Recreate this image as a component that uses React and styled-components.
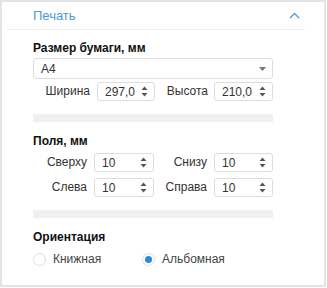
import React, { useState } from "react";
import styled, { createGlobalStyle } from "styled-components";

const GlobalStyle = createGlobalStyle`
  html, body { margin: 0; padding: 0; background: #ffffff; }
  body { font-family: "Liberation Sans", Arial, sans-serif; color: #333; }
`;

const Card = styled.div`
  box-sizing: border-box;
  width: 326px;
  height: 287px;
  border: 2px solid #e4e4e4;
  background: #fff;
`;

const Header = styled.div`
  display: flex;
  align-items: center;
  justify-content: space-between;
  height: 27px;
  margin: 0 19px 0 5px;
  padding: 0 5px 0 26px;
  border-bottom: 1px solid #eeeeee;
`;

const Title = styled.span`
  font-size: 13px;
  color: #4a9ad8;
`;

const Body = styled.div`
  padding: 10px 0 0 31px;
  width: 240px;
`;

const SectionTitle = styled.div`
  font-size: 12px;
  font-weight: bold;
  color: #111;
  height: 15px;
  line-height: 15px;
  margin-top: ${(p) => p.top || 0}px;
`;

const Select = styled.div`
  box-sizing: border-box;
  display: flex;
  align-items: center;
  justify-content: space-between;
  height: 21px;
  margin-top: 2px;
  padding: 0 6px 0 7px;
  border: 1px solid #dddddd;
  border-radius: 3px;
  font-size: 12px;
  color: #333;
`;

const Row = styled.div`
  display: grid;
  grid-template-columns: ${(p) => p.cols};
  margin-top: ${(p) => p.top}px;
  height: 19px;
`;

const Field = styled.div`
  display: flex;
  align-items: center;
  justify-content: flex-end;
  gap: ${(p) => p.gap || 7}px;
`;

const Label = styled.span`
  font-size: 12px;
  color: #333;
  position: relative;
  top: -1px;
`;

const Spin = styled.div`
  box-sizing: border-box;
  display: flex;
  align-items: center;
  justify-content: space-between;
  width: ${(p) => p.w}px;
  height: 19px;
  padding: 0 6px 0 7px;
  border: 1px solid #dddddd;
  border-radius: 3px;
  font-size: 12px;
  color: #333;
`;

const Bar = styled.div`
  height: 8px;
  background: #f0f0f0;
  margin-top: ${(p) => p.top}px;
`;

const Radios = styled.div`
  display: flex;
  margin-top: 7px;
  height: 14px;
`;

const RadioItem = styled.label`
  display: flex;
  align-items: center;
  gap: 7px;
  width: 109px;
  font-size: 12px;
  color: #444;
  cursor: pointer;
`;

const Circle = styled.span`
  box-sizing: border-box;
  width: 13px;
  height: 13px;
  border-radius: 50%;
  border: 1px solid #dedede;
  display: flex;
  align-items: center;
  justify-content: center;
  &::after {
    content: "";
    width: 7px;
    height: 7px;
    border-radius: 50%;
    background: ${(p) => (p.on ? "#2b8bd6" : "transparent")};
  }
`;

const Chevron = () => (
  <svg width="11" height="7" viewBox="0 0 11 7">
    <path d="M1 6 L5.5 1.5 L10 6" fill="none" stroke="#4a9ad8" strokeWidth="1.3" />
  </svg>
);

const Caret = () => (
  <svg width="7" height="4" viewBox="0 0 7 4">
    <path d="M0 0 H7 L3.5 4 Z" fill="#777" />
  </svg>
);

const Arrows = () => (
  <svg width="7" height="11" viewBox="0 0 7 11">
    <path d="M0.5 4 L3.5 0.5 L6.5 4 Z M0.5 7 L3.5 10.5 L6.5 7 Z" fill="#555" />
  </svg>
);

const SpinField = ({ label, value, w, gap }) => (
  <Field gap={gap}>
    <Label>{label}</Label>
    <Spin w={w}>
      <span>{value}</span>
      <Arrows />
    </Spin>
  </Field>
);

export default function App() {
  const [orient, setOrient] = useState("land");
  return (
    <>
      <GlobalStyle />
      <Card>
        <Header>
          <Title>Печать</Title>
          <Chevron />
        </Header>
        <Body>
          <SectionTitle top={1}>Размер бумаги, мм</SectionTitle>
          <Select>
            <span>A4</span>
            <Caret />
          </Select>
          <Row cols="122px 118px" top={3}>
            <SpinField label="Ширина" value="297,0" w={58} />
            <SpinField label="Высота" value="210,0" w={59} gap={6} />
          </Row>
          <Bar top={13} />
          <SectionTitle top={12}>Поля, мм</SectionTitle>
          <Row cols="121px 119px" top={4}>
            <SpinField label="Сверху" value="10" w={60} />
            <SpinField label="Снизу" value="10" w={59} />
          </Row>
          <Row cols="121px 119px" top={6}>
            <SpinField label="Слева" value="10" w={60} />
            <SpinField label="Справа" value="10" w={59} />
          </Row>
          <Bar top={13} />
          <SectionTitle top={12}>Ориентация</SectionTitle>
          <Radios>
            <RadioItem onClick={() => setOrient("port")}>
              <Circle on={orient === "port" ? 1 : 0} />
              Книжная
            </RadioItem>
            <RadioItem onClick={() => setOrient("land")}>
              <Circle on={orient === "land" ? 1 : 0} />
              Альбомная
            </RadioItem>
          </Radios>
        </Body>
      </Card>
    </>
  );
}
